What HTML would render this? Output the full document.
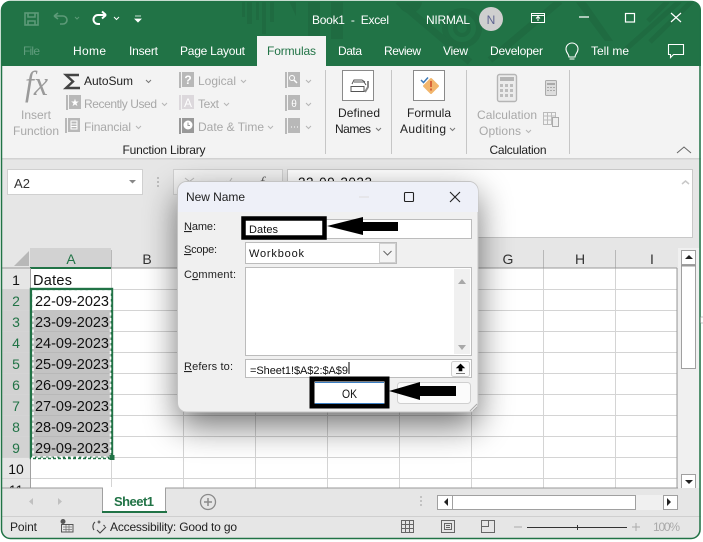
<!DOCTYPE html>
<html><head><meta charset="utf-8"><title>Excel New Name</title>
<style>
html,body{margin:0;padding:0;background:#fff;width:703px;height:542px;overflow:hidden}
svg{display:block}
text{font-family:"Liberation Sans",sans-serif;font-size:12px;fill:#222;white-space:pre}
.t{fill:#fff}
.d{fill:#a8a8a8}
.c{font-size:14.5px;fill:#111}
.g{fill:#217346}
.l{font-size:11px;fill:#222}
.ch{fill:none;stroke:#777;stroke-width:1}
.chd{fill:none;stroke:#b5b5b5;stroke-width:1}
.p{fill:#1f6b41}
.ps{fill:none;stroke:#1f6b41}
</style></head><body>
<svg width="703" height="542" viewBox="0 0 703 542" xmlns="http://www.w3.org/2000/svg">
<defs>
<filter id="sh" x="-40%" y="-40%" width="180%" height="180%"><feGaussianBlur stdDeviation="17"/></filter>
<clipPath id="win"><rect x="1" y="1" width="700" height="538" rx="9"/></clipPath>
<clipPath id="tb"><rect x="0" y="0" width="703" height="66"/></clipPath>
</defs>
<rect width="703" height="542" fill="#fff"/>
<g clip-path="url(#win)">
<rect x="1" y="1" width="700" height="538" fill="#e6e6e6"/>
<!-- title -->
<rect x="1" y="1" width="700" height="65" fill="#217346"/>
<g clip-path="url(#tb)">
<rect class="p" x="242" y="1" width="3" height="16"/><rect class="p" x="247" y="1" width="5" height="23"/><rect class="p" x="256" y="1" width="3" height="19"/><rect class="p" x="262" y="1" width="4" height="33"/><rect class="p" x="270" y="1" width="4" height="21"/>
<path class="p" d="M289 1h7v15z"/><rect class="p" x="308" y="1" width="12" height="35"/><rect class="p" x="331" y="1" width="12" height="38"/>
<path class="p" d="M398 1a12 12 0 0 0 24 0z"/>
<circle class="ps" cx="462" cy="28" r="17" stroke-width="6"/><circle class="ps" cx="462" cy="28" r="7" stroke-width="4"/>
<path class="ps" stroke-width="7" d="M398 1 L470 62 M490 60 L560 1"/>
<path class="p" d="M575 1l30 40h8L585 1z"/>
<path class="ps" stroke-width="5" d="M692 1L650 42M680 1L625 50M668 1l-20 20"/>
</g>
<!-- QAT -->
<g fill="none" stroke="#5d9a78" stroke-width="1.600">
<rect x="25" y="13" width="13" height="12"/><path d="M28 13v4h7v-4M28 25v-4h7v4"/>
<path d="M54 16h9a4 4 0 0 1 0 8h-3M54 16l4-3M54 16l4 3"/>
</g>
<path d="M75 17l2 2 2-2" fill="none" stroke="#5d9a78"/>
<path d="M106 15h-8a4.500 4.500 0 0 0 0 9h2M106 15l-4-3.500M106 15l-4 3.500" fill="none" stroke="#fff" stroke-width="2"/>
<path d="M114 17l2.500 2.500 2.500-2.500" fill="none" stroke="#fff"/>
<path d="M135 16h6M135 19h6l-3 3z" fill="#fff" stroke="#fff" stroke-width=".8"/>
<text class="t" x="312" y="24" textLength="77">Book1  -  Excel</text>
<text class="t" x="426" y="24" textLength="44">NIRMAL</text>
<circle cx="491" cy="19" r="12" fill="#cfcfcf"/>
<text x="491" y="24" text-anchor="middle" style="fill:#5f6490">N</text>
<g fill="none" stroke="#fff"><path d="M531.500 13.500h13v9h-13zM531.500 15.500h13M538 21v-4M536 18.500l2-2 2 2"/>
<path d="M579 17h10" stroke-width="1.200"/><rect x="625.500" y="13.500" width="9" height="8.500" stroke-width="1.200"/><path d="M671 13l10 9M681 13l-10 9" stroke-width="1.200"/></g>
<!-- tabs -->
<text x="23" y="55" textLength="17" style="fill:#5f9c7c">File</text>
<text class="t" x="73" y="55" textLength="33">Home</text>
<text class="t" x="129" y="55" textLength="29">Insert</text>
<text class="t" x="180" y="55" textLength="65">Page Layout</text>
<rect x="257" y="36" width="69" height="30" fill="#f3f3f3"/>
<text class="g" x="267" y="55" textLength="49">Formulas</text>
<text class="t" x="338" y="55" textLength="24">Data</text>
<text class="t" x="384" y="55" textLength="37">Review</text>
<text class="t" x="443" y="55" textLength="25">View</text>
<text class="t" x="490" y="55" textLength="53">Developer</text>
<path d="M569 57c0-3-3-4-3-8a6 6 0 0 1 12 0c0 4-3 5-3 8zM569.500 59h5" fill="none" stroke="#fff" stroke-width="1.100"/>
<text class="t" x="591" y="55" textLength="38">Tell me</text>
<path d="M668.500 44.500h15v10h-10l-3 3v-3h-2z" fill="none" stroke="#fff" stroke-width="1.100"/>
<!-- ribbon -->
<rect x="1" y="66" width="700" height="92" fill="#f3f3f3"/>
<rect x="1" y="158" width="700" height="1.500" fill="#d2d2d2"/>
<text x="25" y="95" style="font-family:'Liberation Serif',serif;font-style:italic;font-size:35px;fill:#9a9a9a" textLength="23" lengthAdjust="spacingAndGlyphs">fx</text>
<text class="d" x="36" y="119" text-anchor="middle">Insert</text>
<text class="d" x="36" y="135" text-anchor="middle" textLength="46">Function</text>
<path d="M79 75h-13l7 6.500-7 6.500h14" fill="none" stroke="#444" stroke-width="2.400"/>
<text x="84" y="85" textLength="49">AutoSum</text>
<path class="ch" d="M146 80l2.500 2.500 2.500-2.500"/>
<!-- book icons -->
<g fill="#b8b8b8">
<rect x="66" y="95" width="2" height="15"/><rect x="69" y="95" width="12" height="14"/>
<rect x="65" y="118" width="2" height="15"/><rect x="68" y="118" width="12" height="14"/>
<rect x="179" y="72" width="2" height="16"/><rect x="182" y="72" width="12" height="15"/>
<rect x="179" y="95" width="2" height="15" fill="#dcd8dc"/><rect x="182" y="95" width="12" height="14" fill="#dcd8dc"/>
<rect x="179" y="118" width="2" height="16" fill="#999"/><rect x="182" y="118" width="12" height="15" fill="#999"/>
<rect x="285" y="72" width="2" height="16"/><rect x="288" y="72" width="12" height="15"/>
<rect x="285" y="95" width="2" height="16"/><rect x="288" y="95" width="12" height="15"/>
<rect x="285" y="118" width="2" height="16"/><rect x="288" y="118" width="12" height="15"/>
</g>
<text x="75" y="106" text-anchor="middle" style="fill:#fff;font-size:10px">★</text>
<path d="M71 121h6v8h-6zM71 124h6M71 126.500h6" fill="none" stroke="#fff"/>
<text x="188" y="84" text-anchor="middle" style="fill:#fff;font-size:12px;font-weight:bold">?</text>
<text x="188" y="107" text-anchor="middle" style="fill:#fff;font-size:12px">A</text>
<circle cx="188" cy="125" r="4.500" fill="#fff"/><path d="M188 122.500v3h2" fill="none" stroke="#999"/>
<circle cx="292" cy="78" r="2.500" fill="none" stroke="#fff"/><path d="M294 80l3 3" stroke="#fff" stroke-width="1.500"/>
<text x="294" y="107" text-anchor="middle" style="fill:#fff;font-size:10px">θ</text>
<path d="M291 127h1M294 127h1M297 127h1" stroke="#fff"/>
<text class="d" x="84" y="108" textLength="73">Recently Used</text>
<path class="chd" d="M162 103l2.500 2.500 2.500-2.500"/>
<text class="d" x="84" y="131" textLength="47">Financial</text>
<path class="chd" d="M136 126l2.500 2.500 2.500-2.500"/>
<text class="d" x="198" y="85" textLength="38">Logical</text>
<path class="chd" d="M241 80l2.500 2.500 2.500-2.500"/>
<text class="d" x="198" y="108" textLength="21">Text</text>
<path class="chd" d="M224 103l2.500 2.500 2.500-2.500"/>
<text class="d" x="198" y="131" textLength="66">Date &amp; Time</text>
<path class="chd" d="M268 126l2.500 2.500 2.500-2.500"/>
<path class="chd" d="M306 80l2.500 2.500 2.500-2.500M306 103l2.500 2.500 2.500-2.500M306 126l2.500 2.500 2.500-2.500"/>
<text x="164" y="154" text-anchor="middle" textLength="83">Function Library</text>
<path d="M325.500 70v84M391.500 70v84M466.500 70v84M569.500 70v84" stroke="#c6c6c6"/>
<!-- defined names -->
<rect x="342.500" y="70.500" width="31" height="30" fill="#fff" stroke="#8a8a8a"/>
<path d="M351 91.500h13v-5h-13zM352 84l2-4h8l3 2M354 82h10l2 3" fill="none" stroke="#555"/>
<path d="M365 92l3-5v-6" fill="none" stroke="#888" stroke-width="2"/>
<text x="359" y="117" text-anchor="middle" textLength="42">Defined</text>
<text x="353" y="133" text-anchor="middle" textLength="36">Names</text>
<path class="ch" d="M376 128l2.500 2.500 2.500-2.500"/>
<!-- formula auditing -->
<rect x="413.500" y="70.500" width="31" height="30" fill="#fff" stroke="#8a8a8a"/>
<path d="M431 79l7 7-7 7-7-7z" fill="#f2b66d" stroke="#f2b66d" stroke-width="2" stroke-linejoin="round"/>
<path d="M431 81v6M431 88.500v2" stroke="#d2502e" stroke-width="1.600"/>
<path d="M421 80l2.500 2.500 4.500-5" fill="none" stroke="#3d79b8" stroke-width="1.500"/>
<text x="429" y="117" text-anchor="middle" textLength="44">Formula</text>
<text x="423" y="133" text-anchor="middle" textLength="46">Auditing</text>
<path class="ch" d="M450 128l2.500 2.500 2.500-2.500"/>
<!-- calculation -->
<rect x="497.500" y="74.500" width="19" height="27" rx="2" fill="#ececec" stroke="#b5b5b5" stroke-width="1.400"/>
<rect x="500" y="77" width="14" height="4" fill="#b5b5b5"/>
<path d="M500 84h3v3h-3zM505 84h3v3h-3zM510 84h3v3h-3zM500 89h3v3h-3zM505 89h3v3h-3zM510 89h3v3h-3zM500 94h3v3h-3zM505 94h3v3h-3zM510 94h3v3h-3z" fill="#bdbdbd"/>
<text class="d" x="507" y="119" text-anchor="middle" textLength="60">Calculation</text>
<text class="d" x="500" y="135" text-anchor="middle" textLength="42">Options</text>
<path class="chd" d="M526 130l2.500 2.500 2.500-2.500"/>
<rect x="545.500" y="80.500" width="11" height="15" rx="1" fill="#ddd" stroke="#aaa"/>
<path d="M547 83h8v2h-8zM547 87h2v1h-2zM550 87h2v1h-2zM553 87h2v1h-2zM547 90h2v1h-2zM550 90h2v1h-2zM553 90h2v1h-2z" fill="#aaa"/>
<path d="M543.500 112.500h12v12h-12zM543.500 116h12M543.500 120h12M547.500 112.500v12M551.500 112.500v12" fill="none" stroke="#bbb"/>
<rect x="552.500" y="117.500" width="6" height="9" fill="#eee" stroke="#aaa"/>
<text x="518" y="154" text-anchor="middle" textLength="57">Calculation</text>
<path d="M677 153l7-6 7 6" fill="none" stroke="#666"/>
<!-- formula bar -->
<rect x="7.500" y="169.500" width="135" height="25" fill="#fff" stroke="#d0d0d0"/>
<text x="14" y="188" style="font-size:13px;fill:#333" textLength="16">A2</text>
<path d="M129 180h7l-3.500 3.500z" fill="#888"/>
<path d="M158 177v2M158 181v2M158 185v2" stroke="#b0b0b0" stroke-width="1.500"/>
<rect x="173.500" y="169.500" width="109" height="25" fill="#f2f2f2" stroke="#d0d0d0"/>
<path d="M185 178l9 7M194 178l-9 7" stroke="#bbb"/>
<path d="M226 181l2 3 4-6" fill="none" stroke="#bbb"/>
<text x="260" y="187" style="font-family:'Liberation Serif',serif;font-style:italic;font-size:15px;fill:#666">f</text>
<rect x="287.500" y="169.500" width="405" height="68" fill="#fff" stroke="#c8c8c8"/>
<text class="c" x="298" y="187" textLength="74" style="font-size:13.500px">22-09-2023</text>
<path d="M682 184l3.500-3 3.500 3" fill="none" stroke="#c8c8c8" stroke-width="1.500"/>
<!-- grid -->
<rect x="1" y="248" width="680" height="20" fill="#e6e6e6"/>
<rect x="2" y="268" width="675" height="220" fill="#fff"/>
<rect x="2" y="268" width="28" height="220" fill="#e6e6e6"/>
<path d="M29 251v15H14z" fill="#b8b8b8"/>
<rect x="30" y="248" width="81" height="20" fill="#d2d2d2"/>
<rect x="2" y="289" width="28" height="168" fill="#d2d2d2"/>
<path d="M111.500 268v220M183.500 268v220M255.500 268v220M327.500 268v220M399.500 268v220M471.500 268v220M543.500 268v220M615.500 268v220M2 289.500h675M2 310.500h675M2 331.500h675M2 352.500h675M2 373.500h675M2 394.500h675M2 415.500h675M2 436.500h675M2 457.500h675M2 478.500h675" stroke="#d4d4d4"/>
<path d="M183.500 250v18M255.500 250v18M327.500 250v18M399.500 250v18M471.500 250v18M543.500 250v18M615.500 250v18M111.500 250v18" stroke="#b8b8b8"/>
<rect x="111" y="267.500" width="566" height="1" fill="#999"/>
<rect x="2" y="267.500" width="28" height="1" fill="#999"/>
<rect x="30" y="267" width="81" height="2" fill="#217346"/>
<path d="M30.500 268v220" stroke="#a0a0a0"/>
<path d="M677 268v220" stroke="#999"/>
<rect x="1" y="487.500" width="677" height="1" fill="#999"/>
<text class="c g" x="71" y="264" text-anchor="middle" style="fill:#217346;font-size:14px">A</text>
<text class="c" x="147" y="264" text-anchor="middle" style="font-size:14px;fill:#333">B</text>
<text class="c" x="508" y="264" text-anchor="middle" style="font-size:14px;fill:#333">G</text>
<text class="c" x="580" y="264" text-anchor="middle" style="font-size:14px;fill:#333">H</text>
<text class="c" x="652" y="264" text-anchor="middle" style="font-size:14px;fill:#333">I</text>
<g>
<text class="c" x="16" y="285" text-anchor="middle" style="font-size:14px">1</text>
<text class="c" x="16" y="306" text-anchor="middle" style="fill:#217346;font-size:14px">2</text>
<text class="c" x="16" y="327" text-anchor="middle" style="fill:#217346;font-size:14px">3</text>
<text class="c" x="16" y="348" text-anchor="middle" style="fill:#217346;font-size:14px">4</text>
<text class="c" x="16" y="369" text-anchor="middle" style="fill:#217346;font-size:14px">5</text>
<text class="c" x="16" y="390" text-anchor="middle" style="fill:#217346;font-size:14px">6</text>
<text class="c" x="16" y="411" text-anchor="middle" style="fill:#217346;font-size:14px">7</text>
<text class="c" x="16" y="432" text-anchor="middle" style="fill:#217346;font-size:14px">8</text>
<text class="c" x="16" y="453" text-anchor="middle" style="fill:#217346;font-size:14px">9</text>
<text class="c" x="16" y="474" text-anchor="middle" style="font-size:14px">10</text>
<text class="c" x="16" y="495" text-anchor="middle" style="font-size:14px">11</text>
</g>
<rect x="31" y="310" width="80" height="147" fill="#c3c3c3"/>
<path d="M31 331.500h80M31 352.500h80M31 373.500h80M31 394.500h80M31 415.500h80M31 436.500h80" stroke="#b8b8b8"/>
<text class="c" x="33" y="285" textLength="39">Dates</text>
<text class="c" x="35" y="306" textLength="74">22-09-2023</text>
<text class="c" x="35" y="327" textLength="74">23-09-2023</text>
<text class="c" x="35" y="348" textLength="74">24-09-2023</text>
<text class="c" x="35" y="369" textLength="74">25-09-2023</text>
<text class="c" x="35" y="390" textLength="74">26-09-2023</text>
<text class="c" x="35" y="411" textLength="74">27-09-2023</text>
<text class="c" x="35" y="432" textLength="74">28-09-2023</text>
<text class="c" x="35" y="453" textLength="74">29-09-2023</text>
<rect x="31" y="289" width="81" height="169" fill="none" stroke="#217346" stroke-width="2.400"/>
<path d="M33 291H110.500V457H33Z" fill="none" stroke="#fff" stroke-width="1.600" stroke-dasharray="3 2.500"/>
<path d="M31 458.500H112" stroke="#fff" stroke-width="2" stroke-dasharray="2 3"/>
<rect x="109.500" y="455" width="5" height="5" fill="#217346"/>
<!-- scrollbar v -->
<rect x="678" y="248" width="22" height="240" fill="#f0f0f0"/>
<rect x="681.500" y="250.500" width="14" height="14" fill="#fff" stroke="#a0a0a0"/>
<path d="M685 259h8l-4-4z" fill="#222"/>
<rect x="681.500" y="265.500" width="14" height="103" fill="#fff" stroke="#a0a0a0"/>
<rect x="681" y="265" width="15" height="1.500" fill="#999"/>
<rect x="681.500" y="474.500" width="14" height="14" fill="#fff" stroke="#a0a0a0"/>
<path d="M685 480h8l-4 4z" fill="#222"/>
<!-- tab bar -->
<rect x="1" y="488" width="700" height="28" fill="#e6e6e6"/>
<rect x="1" y="487.500" width="101" height="1" fill="#999"/><rect x="166" y="487.500" width="512" height="1" fill="#999"/>
<rect x="102.500" y="488" width="63" height="24" fill="#fff" stroke="#a0a0a0"/>
<rect x="103" y="487" width="62" height="3" fill="#fff"/>
<rect x="102" y="511" width="65" height="2" fill="#217346"/>
<text x="114" y="506" textLength="40" style="font-weight:bold;fill:#217346;font-size:13px">Sheet1</text>
<path d="M33 498v7l-4-3.500zM58 498v7l4-3.500z" fill="#c0c0c0"/>
<circle cx="208" cy="502" r="7.500" fill="none" stroke="#8a8a8a" stroke-width="1.300"/>
<path d="M204 502h8M208 498v8" stroke="#8a8a8a" stroke-width="1.500"/>
<path d="M421 496v2M421 500v2M421 504v2" stroke="#b5b5b5" stroke-width="1.500"/>
<rect x="437" y="495" width="241" height="15" fill="#f0f0f0"/>
<rect x="437.500" y="495.500" width="15" height="14" fill="#fff" stroke="#a0a0a0"/>
<path d="M448 498v8l-4-4z" fill="#222"/>
<rect x="452.500" y="495.500" width="183" height="14" fill="#fff" stroke="#a0a0a0"/>
<rect x="663.500" y="495.500" width="14" height="14" fill="#fff" stroke="#a0a0a0"/>
<path d="M667 498v8l4-4z" fill="#222"/>
<!-- status -->
<rect x="1" y="516" width="700" height="1" fill="#cfcfcf"/>
<text x="10" y="531" textLength="27">Point</text>
<circle cx="63" cy="521.500" r="2.500" fill="#555"/>
<path d="M61.500 524.500h11.500v7.500h-11.500z" fill="none" stroke="#555"/><path d="M63 527h9M63 529.500h9M66 525v7M69 525v7" stroke="#777" stroke-width=".8"/>
<path d="M95 522a6 6 0 0 0-1 8M99 520.500v3M97.500 522h3M103.500 525l1.500 1.500M97 530l3 3 6-6" fill="none" stroke="#444" stroke-width="1.100"/>
<text x="110" y="531" textLength="127">Accessibility: Good to go</text>
<path d="M401.500 520.500h12v12h-12zM405.500 520.500v12M409.500 520.500v12M401.500 524.500h12M401.500 528.500h12" fill="none" stroke="#666"/>
<path d="M441.500 520.500h13v12h-13zM444.500 523.500h7v6h-7zM446 525.500h4M446 527.500h4" fill="none" stroke="#666"/>
<path d="M481.500 520.500h13v12h-13zM481.500 526.500h7v-6M488.500 526.500v-6" fill="none" stroke="#666"/>
<path d="M514 527h8" stroke="#aaa"/>
<path d="M527 527.500h100" stroke="#333"/>
<path d="M577.500 525v5" stroke="#333"/>
<path d="M632 527h8M636 523v8" stroke="#aaa"/>
<text x="653" y="531" textLength="27" style="fill:#aaa">100%</text>
</g>
<!-- window outline -->
<rect x="1.500" y="1.500" width="698.500" height="537" rx="9" fill="none" stroke="#217346" stroke-width="1.500"/>
<path d="M700.500 317h3v6h-3z" fill="#fff" stroke="#888" stroke-width=".6"/>
<!-- dialog shadow -->
<rect x="178" y="194" width="300" height="232" rx="8" fill="#000" opacity=".55" filter="url(#sh)"/>
<!-- dialog -->
<rect x="177.500" y="181.500" width="300.500" height="230.500" rx="9" fill="#f0f0f0" stroke="#c4c4c4"/>
<path d="M178 212v-21a9 9 0 0 1 9-9h282a9 9 0 0 1 9 9v21z" fill="#eef0f8"/>
<text x="186" y="201" textLength="59">New Name</text>
<path d="M359 197h10" stroke="#ddd"/>
<rect x="404.500" y="192.500" width="9" height="9" rx="1" fill="none" stroke="#222" stroke-width="1.100"/>
<path d="M450 192l10 10M460 192l-10 10" stroke="#222" stroke-width="1.100"/>
<text class="l" x="184" y="230" textLength="32"><tspan text-decoration="underline">N</tspan>ame:</text>
<text class="l" x="184" y="253" textLength="33"><tspan text-decoration="underline">S</tspan>cope:</text>
<text class="l" x="184" y="278" textLength="52">C<tspan text-decoration="underline">o</tspan>mment:</text>
<text class="l" x="184" y="370" textLength="49"><tspan text-decoration="underline">R</tspan>efers to:</text>
<rect x="245.500" y="219.500" width="226" height="19" fill="#fff" stroke="#bcbcbc"/>
<rect x="243.500" y="218.500" width="81" height="19" fill="#fff" stroke="#000" stroke-width="4.500"/>
<text x="249" y="233" textLength="29" style="font-size:11px;fill:#111">Dates</text>
<path d="M327 226L363 217V222H398V231H363V235Z" fill="#000"/>
<rect x="245.500" y="242.500" width="151" height="21" fill="#fff" stroke="#bcbcbc"/>
<rect x="379.500" y="243.500" width="16" height="19" fill="#f4f4f4" stroke="#d0d0d0"/>
<path d="M383.500 251l4 4 4-4" fill="none" stroke="#666"/>
<text x="249" y="257" textLength="55" style="font-size:11px;fill:#111">Workbook</text>
<rect x="245.500" y="267.500" width="226" height="88" fill="#fff" stroke="#bcbcbc"/>
<rect x="454" y="269" width="16" height="85" fill="#f0f0f0"/>
<path d="M458 284l4-5 4 5z M458 345l4 5 4-5z" fill="#a8a8a8"/>
<rect x="245.500" y="359.500" width="226" height="18" fill="#fff" stroke="#bcbcbc"/>
<text x="250" y="374" textLength="98" style="font-size:11px;fill:#111">=Sheet1!$A$2:$A$9</text>
<path d="M349 362v12" stroke="#000"/>
<rect x="451.500" y="361.500" width="18" height="15" rx="2" fill="#fbfbfb" stroke="#d0d0d0"/>
<path d="M460.500 364l4 4h-2.500v3h-3v-3h-2.500zM456 373.500h9" fill="#000" stroke="#000" stroke-width=".6"/>
<rect x="397.500" y="382.500" width="73" height="21" rx="3" fill="#fbfbfb" stroke="#d0d0d0"/>
<rect x="312" y="379" width="75" height="27" fill="#fff" stroke="#000" stroke-width="5"/>
<path d="M315 382.500h69M315 403.500h69" stroke="#3b7fc4"/>
<text x="342" y="398" style="font-size:11.500px;fill:#111" textLength="15" lengthAdjust="spacingAndGlyphs">OK</text>
<path d="M389 391L420 382V386H456V396H420V400Z" fill="#000"/>
<path d="M470 411l7-7M473 411l4-4" stroke="#aaa"/>
</svg>
</body></html>
